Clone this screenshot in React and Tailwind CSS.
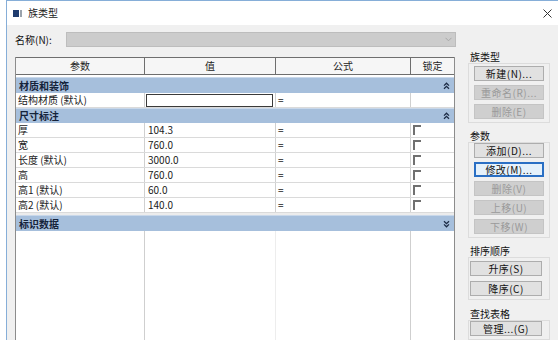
import React from "react";

const F = { fontFamily: '"Noto Sans CJK SC", "Noto Sans", sans-serif' };

function Chevrons({ down }) {
  return (
    <svg width="7" height="8" viewBox="0 0 7 8" className="shrink-0">
      {down ? (
        <g fill="none" stroke="#1b2a44" strokeWidth="1.3">
          <path d="M1 1.2 L3.5 3.6 L6 1.2" />
          <path d="M1 4.4 L3.5 6.8 L6 4.4" />
        </g>
      ) : (
        <g fill="none" stroke="#1b2a44" strokeWidth="1.3">
          <path d="M1 3.6 L3.5 1.2 L6 3.6" />
          <path d="M1 6.8 L3.5 4.4 L6 6.8" />
        </g>
      )}
    </svg>
  );
}

function GroupRow({ label, down, h = "h-[16px]" }) {
  return (
    <div className={`${h} flex items-center justify-between bg-[#a6bfdc] border-t border-[#c9d8ea] pl-[3px] pr-[4px]`}>
      <span className="text-[10px] leading-none font-bold text-[#15233a]">{label}</span>
      <Chevrons down={down} />
    </div>
  );
}

function Check() {
  return <div className="w-[8px] h-[10px] border-t-2 border-l-2 border-[#707070] bg-white ml-[2px]" />;
}

function DataRow({ name, value, input, lock = true }) {
  return (
    <div className="h-[15px] flex bg-white border-b border-[#dadada] text-[10px] leading-none text-[#1a1a1a]">
      <div className="w-[129px] border-r border-[#d0d0d0] flex items-center pl-[2px]">{name}</div>
      <div className="w-[131px] border-r border-[#d0d0d0] flex items-center">
        {input ? (
          <div className="ml-[1px] w-[127px] h-[13px] border border-[#3a3a3a] bg-white" />
        ) : (
          <span className="pl-[3px]">{value}</span>
        )}
      </div>
      <div className="w-[135px] border-r border-[#d0d0d0] flex items-center pl-[2px]">=</div>
      <div className="w-[43px] flex items-center">{lock ? <Check /> : null}</div>
    </div>
  );
}

function Btn({ children, disabled, focus, w = "w-[70px]", ml = "ml-[5px]" }) {
  let cls =
    "h-[15px] flex items-center justify-center text-[10px] leading-none tracking-[0.5px] ";
  if (focus) cls += "border-2 border-[#2a6fc4] bg-[#e5f1fb] text-[#111]";
  else if (disabled) cls += "border border-[#c4c4c4] bg-[#cfcfcf] text-[#9a9a9a]";
  else cls += "border border-[#adadad] bg-[#e1e1e1] text-[#111]";
  return <div className={`${cls} ${w} ${ml}`}>{children}</div>;
}

function Label({ children, mt }) {
  return (
    <div className={`${mt} h-[12px] ml-[4px] text-[10px] leading-[12px] text-[#111]`}>{children}</div>
  );
}

export default function App() {
  return (
    <div className="w-[558px] h-[340px] bg-white overflow-hidden" style={F}>
      <div className="ml-[6px] h-[340px] border-l border-t border-[#86aed8] flex flex-col">
        {/* title bar */}
        <div className="h-[24px] bg-white flex items-center shrink-0">
          <svg width="9" height="7" viewBox="0 0 9 7" className="ml-[6px]">
            <rect x="0" y="0" width="6" height="7" fill="#1f3c6e" />
            <rect x="7" y="0" width="2" height="7" fill="#9aa3ad" />
          </svg>
          <span className="ml-[6px] text-[10px] leading-none text-[#222]">族类型</span>
          <div className="flex-1" />
          <svg width="9" height="9" viewBox="0 0 9 9" className="mr-[6px]">
            <path d="M0.5 0.5 L8.5 8.5 M8.5 0.5 L0.5 8.5" stroke="#333" strokeWidth="1" />
          </svg>
        </div>
        {/* body */}
        <div className="flex-1 bg-[#f0f0f0] flex">
          {/* left */}
          <div className="pl-[8px] w-[449px] flex flex-col">
            <div className="mt-[7px] h-[15px] flex items-center">
              <span className="w-[51px] text-[10px] leading-none text-[#111]">名称(N):</span>
              <div className="flex-1 h-[15px] bg-[#cccccc] border border-[#bdbdbd] flex items-center justify-end pr-[3px]">
                <svg width="7" height="5" viewBox="0 0 7 5">
                  <path d="M0.5 0.8 L3.5 3.8 L6.5 0.8" fill="none" stroke="#a8a8a8" strokeWidth="1" />
                </svg>
              </div>
            </div>
            {/* table */}
            <div className="mt-[10px] w-[440px] flex-1 flex flex-col border-l border-r border-[#8c8c8c] bg-white">
              <div className="h-[18px] flex border-t border-b border-[#6e6e6e] bg-[#f6f6f6] text-[10px] leading-none text-[#222]">
                <div className="w-[129px] border-r border-[#6e6e6e] flex items-center justify-center">参数</div>
                <div className="w-[131px] border-r border-[#6e6e6e] flex items-center justify-center">值</div>
                <div className="w-[135px] border-r border-[#6e6e6e] flex items-center justify-center">公式</div>
                <div className="w-[43px] flex items-center justify-center">锁定</div>
              </div>
              <div className="h-[2px] bg-white" />
              <GroupRow label="材质和装饰" />
              <DataRow name="结构材质 (默认)" input lock={false} />
              <GroupRow label="尺寸标注" h="h-[15px]" />
              <DataRow name="厚" value="104.3" />
              <DataRow name="宽" value="760.0" />
              <DataRow name="长度 (默认)" value="3000.0" />
              <DataRow name="高" value="760.0" />
              <DataRow name="高1 (默认)" value="60.0" />
              <DataRow name="高2 (默认)" value="140.0" />
              <div className="h-[2px] bg-[#ececec]" />
              <GroupRow label="标识数据" down />
              <div className="flex-1 flex bg-white">
                <div className="w-[129px] border-r border-[#cfcfcf]" />
                <div className="w-[131px] border-r border-[#ededed]" />
                <div className="w-[135px] border-r border-[#cfcfcf]" />
                <div className="w-[43px]" />
              </div>
            </div>
          </div>
          {/* right */}
          <div className="ml-[10px] w-[86px] flex flex-col">
            <Label mt="mt-[26px]">族类型</Label>
            <div className="ml-[2px] w-[82px] border border-[#dcdcdc] pt-[2px] pb-[3px] flex flex-col gap-[4px]">
              <Btn>新建(N)...</Btn>
              <Btn disabled>重命名(R)...</Btn>
              <Btn disabled>删除(E)</Btn>
            </div>
            <Label mt="mt-[7px]">参数</Label>
            <div className="ml-[2px] w-[82px] border border-[#dcdcdc] pt-0 pb-[3px] flex flex-col gap-[4px]">
              <Btn>添加(D)...</Btn>
              <Btn focus>修改(M)...</Btn>
              <Btn disabled>删除(V)</Btn>
              <Btn disabled>上移(U)</Btn>
              <Btn disabled>下移(W)</Btn>
            </div>
            <Label mt="mt-[7px]">排序顺序</Label>
            <div className="ml-[2px] w-[82px] border border-[#dcdcdc] pt-[3px] pb-[3px] flex flex-col gap-[5px]">
              <Btn w="w-[72px]" ml="ml-[1px]">升序(S)</Btn>
              <Btn w="w-[72px]" ml="ml-[1px]">降序(C)</Btn>
            </div>
            <Label mt="mt-[8px]">查找表格</Label>
            <div className="ml-[2px] w-[82px] border border-[#dcdcdc] pt-[0px] pb-[3px] flex flex-col">
              <Btn w="w-[72px]" ml="ml-[1px]">管理...(G)</Btn>
            </div>
          </div>
        </div>
      </div>
    </div>
  );
}
